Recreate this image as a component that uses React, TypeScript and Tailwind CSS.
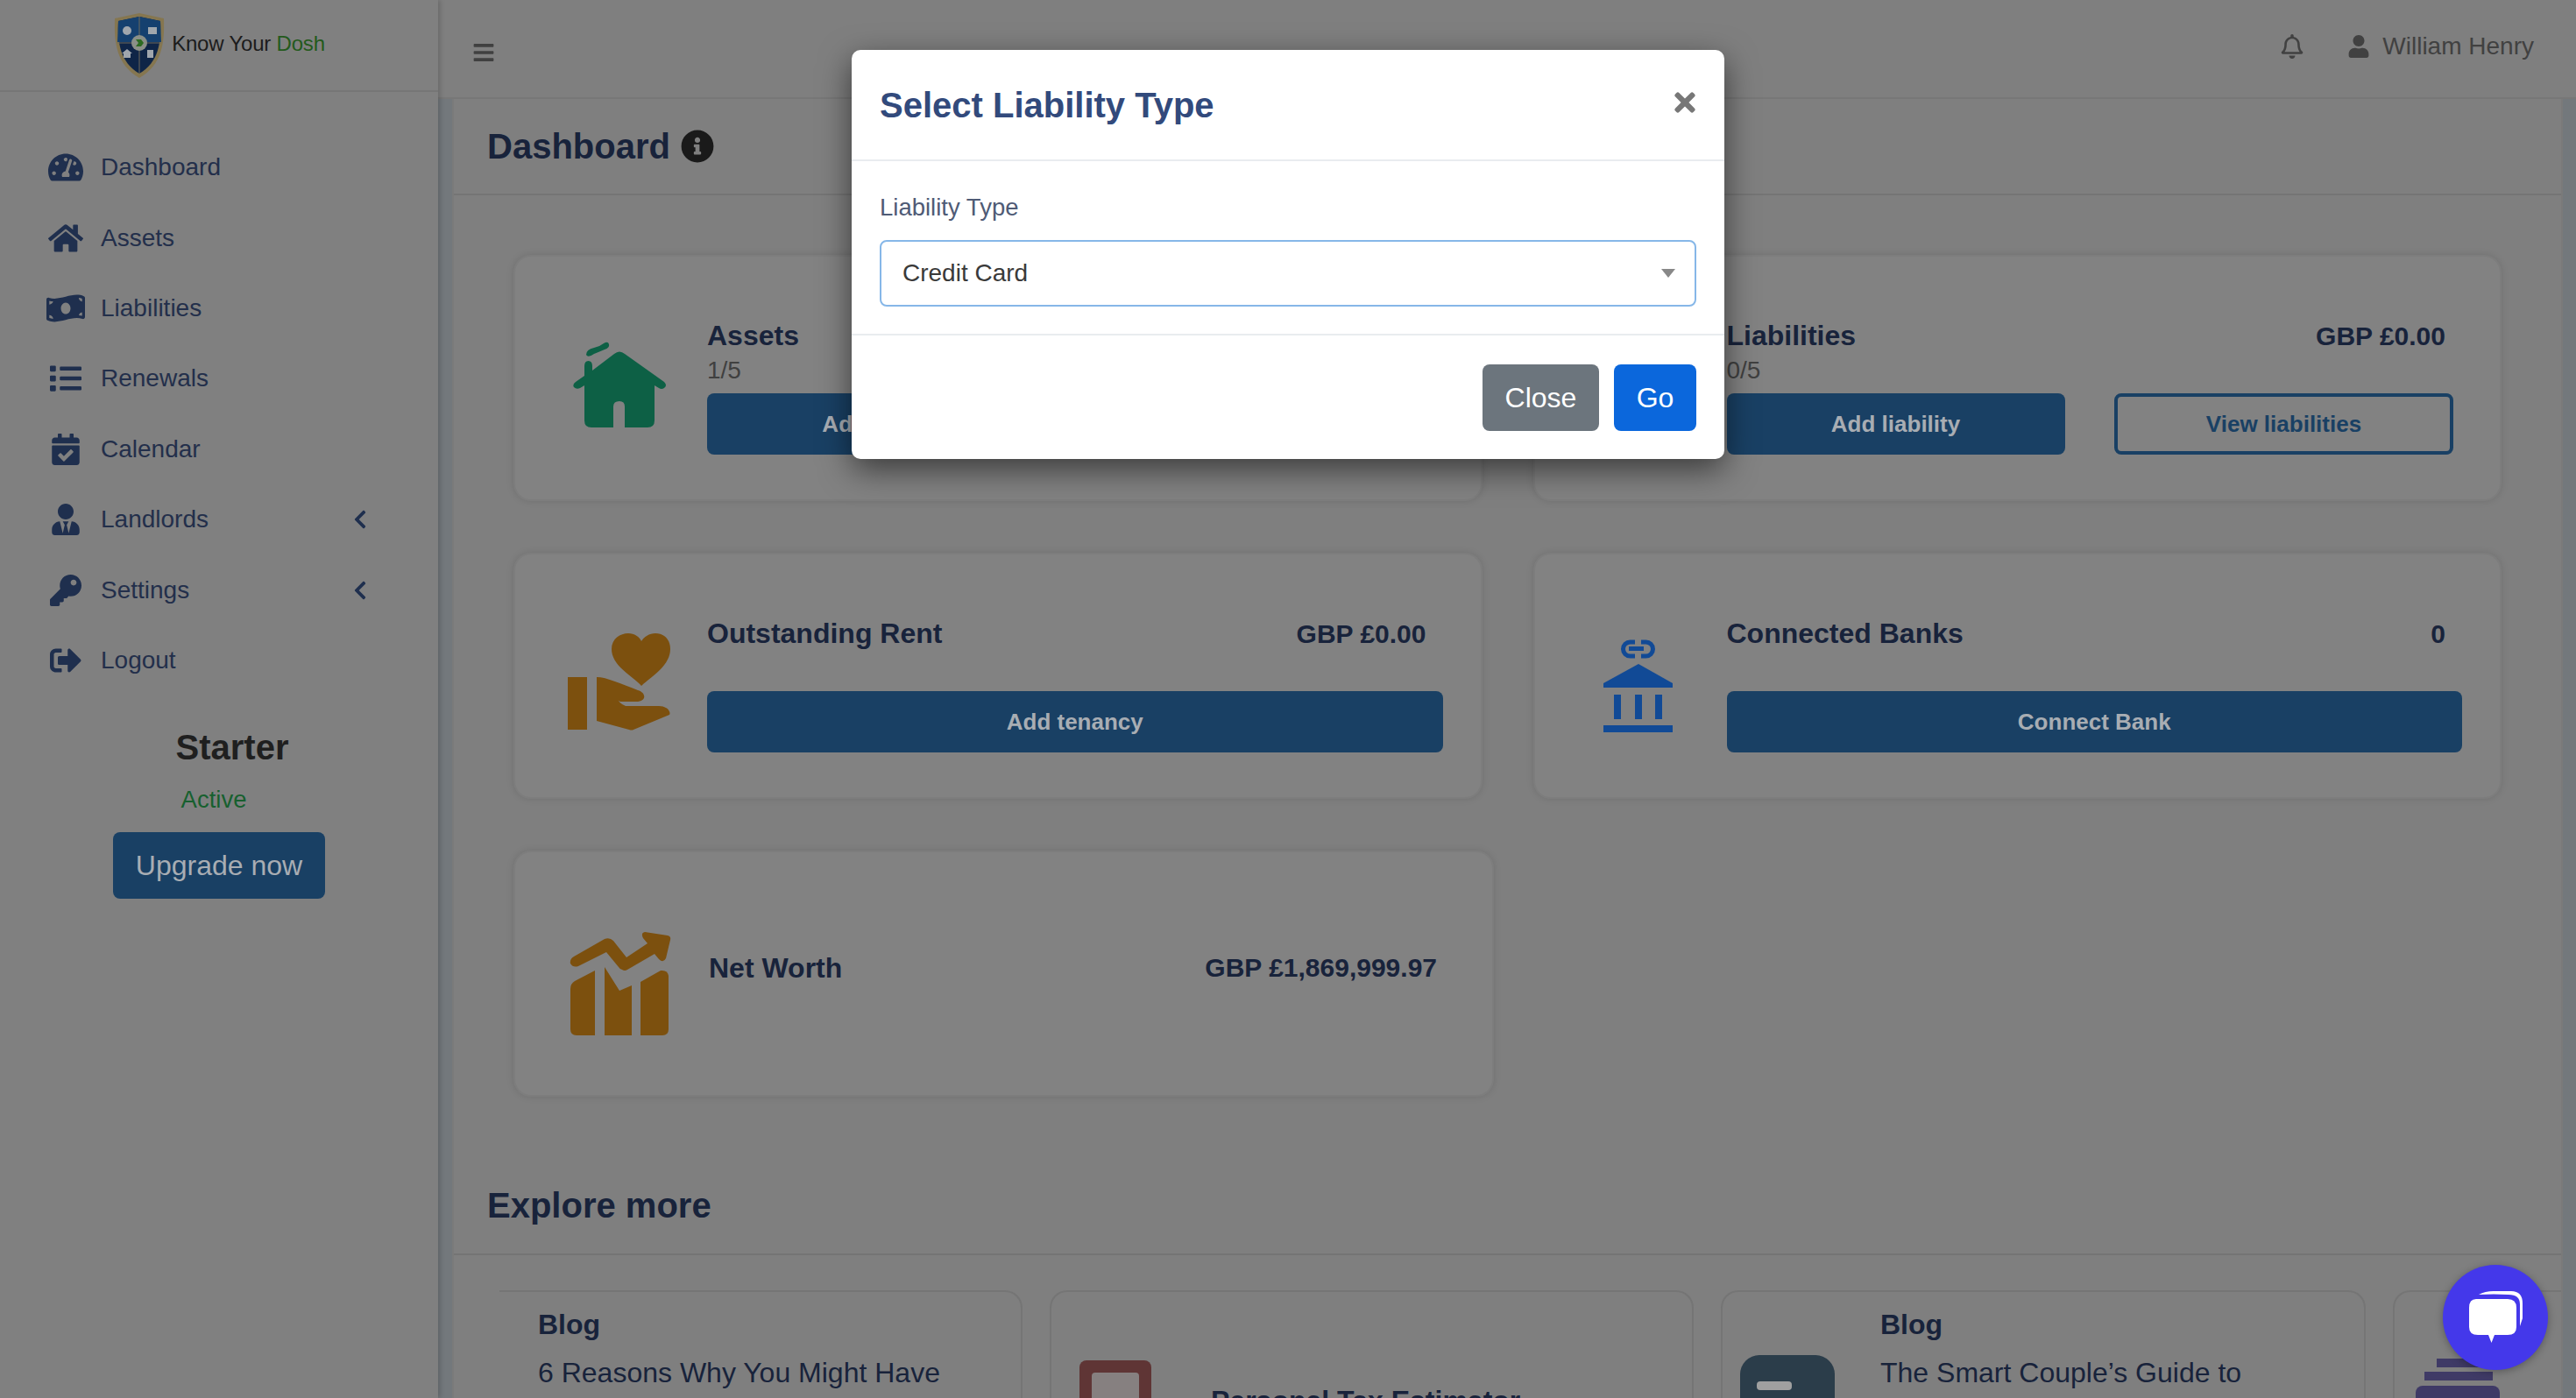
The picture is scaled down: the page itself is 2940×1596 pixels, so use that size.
import { FaTachometerAlt, FaHome, FaMoneyBillWave, FaList, FaCalendarCheck, FaUserTie, FaKey, FaSignOutAlt, FaChevronLeft, FaInfoCircle, FaBars, FaRegBell, FaUser, FaTimes } from "react-icons/fa";

const sans = "font-['Liberation_Sans',Arial,sans-serif]";

const navItems = [
  { label: "Dashboard", icon: FaTachometerAlt, size: 40 },
  { label: "Assets", icon: FaHome, size: 40 },
  { label: "Liabilities", icon: FaMoneyBillWave, size: 44 },
  { label: "Renewals", icon: FaList, size: 36 },
  { label: "Calendar", icon: FaCalendarCheck, size: 36 },
  { label: "Landlords", icon: FaUserTie, size: 36, arrow: true },
  { label: "Settings", icon: FaKey, size: 36, arrow: true },
  { label: "Logout", icon: FaSignOutAlt, size: 36 },
];

const Logo = () => (
  <svg width="60" height="76" viewBox="0 0 60 76" className="shrink-0">
    <path d="M30 1 L58 7 C59 35 56 60 30 75 C4 60 1 35 2 7 Z" fill="#857650" />
    <path d="M30 5 L54 10 C55 35 52 57 30 70 C8 57 5 35 6 10 Z" fill="#0f2547" />
    <path d="M30 5 L54 10 L55 34 L5 34 L6 10 Z" fill="#15406f" />
    <path d="M30 5 V70 M5 35 H55" stroke="#6e6a5c" strokeWidth="1" />
    <circle cx="30" cy="35" r="9" fill="#8b9088" />
    <path d="M26 31 h6 l3 4 -3 4 h-6 l3 -4z" fill="#2d6b22" />
    <circle cx="16" cy="21" r="5" fill="#a0a6ad" />
    <rect x="40" y="17" width="10" height="8" fill="#a0a6ad" />
    <path d="M10 47 l6 -5 6 5 h-2 v5 h-8 v-5z" fill="#a0a6ad" />
    <rect x="39" y="43" width="7" height="9" fill="#a0a6ad" />
  </svg>
);

const HouseIcon = () => (
  <svg width="106" height="100" viewBox="0 0 106 100" className="mt-[12px]">
    <path d="M47 16 Q53 11 59 16 L104 48 Q108 52 104 55 Q101 57 98 55 L93 52 V92 Q93 100 85 100 H59 V76 Q59 70 53 70 Q46 70 46 76 V100 H21 Q13 100 13 92 V52 L8 55 Q4 57 1 54 Q-1 51 3 48 L13 41 V30 Q13 24 17.500 24 Q22 24 22 30 V35 Z" fill="#0d6045" />
    <path d="M15 17 Q15 11 24 9 Q30 8 35 4 Q40 1 41 5 Q42 9 36 11 Q29 14 24 16 Q17 21 15 17Z" fill="#0d6045" />
  </svg>
);

const HandIcon = () => (
  <svg width="118" height="112" viewBox="0 0 118 112" className="mt-[14px]">
    <path d="M84 60 C76 50 50 38 50 18 C50 6 60 0 69 0 C76 0 82 4 84 9 C87 4 93 0 100 0 C110 0 117 7 117 18 C117 38 94 50 84 60Z" fill="#7c500e" />
    <rect x="0" y="50" width="22" height="60" fill="#7c500e" />
    <path d="M33 50 C44 50 62 58 80 65 C90 68 90 78 78 78 H60 Q56 76 56 73 Q58 80 66 83 H104 C114 83 118 90 116 93 L75 110 Q73 111 70 110 L33 100Z" fill="#7c500e" />
  </svg>
);

const BankIcon = () => (
  <svg width="80" height="106" viewBox="0 0 80 106" className="mt-[22px]">
    <path d="M36 3 H30.500 A8 8 0 0 0 30.500 19 H36 M43 3 H48.500 A8 8 0 0 1 48.500 19 H43" fill="none" stroke="#114a96" strokeWidth="5" />
    <rect x="29" y="8" width="17" height="5" fill="#114a96" />
    <path d="M40 28 L79 50 V55 H0 V50Z" fill="#114a96" />
    <rect x="12" y="63" width="8" height="28" fill="#114a96" />
    <rect x="36" y="63" width="8" height="28" fill="#114a96" />
    <rect x="59" y="63" width="8" height="28" fill="#114a96" />
    <rect x="0" y="98" width="79" height="8" fill="#114a96" />
  </svg>
);

const ChartIcon = () => (
  <svg width="116" height="120" viewBox="0 0 116 120" className="mt-[22px]">
    <path d="M86 1 L112 5 Q116 6 115 10 L110 31 Q107 37 102 32 L97 26 L66 44 Q63 46 60 44 Q58 44 56 41 L42 24 L10 40 Q4 42 1 37 Q0 32 5 29 L40 9 Q46 7 50 11 L65 30 L89 14 L84 8 Q81 2 86 1Z" fill="#7c500e" />
    <path d="M29 45 V119 H8 Q1 119 1 112 V66 Q1 60 6 57Z" fill="#7c500e" />
    <path d="M40 41 L57 68 L71 62 V119 H40Z" fill="#7c500e" />
    <path d="M81 58 L104 45 Q112 44 113 51 V112 Q113 119 106 119 H81Z" fill="#7c500e" />
  </svg>
);

const SolidButton = ({ label, className }: { label: string; className: string }) => (
  <button className={`flex h-[70px] items-center justify-center rounded-lg bg-[#194064] text-[26px] font-bold text-[#a8adb3] ${className}`}>
    {label}
  </button>
);

const OutlineButton = ({ label }: { label: string }) => (
  <button className="flex h-[70px] w-[387px] items-center justify-center rounded-lg border-[4px] border-[#194064] text-[26px] font-bold text-[#194064]">
    {label}
  </button>
);

const StatCard = ({
  icon,
  title,
  sub,
  value,
  children,
}: {
  icon: React.ReactNode;
  title: string;
  sub?: string;
  value: string;
  children: React.ReactNode;
}) => (
  <div className="flex h-[281px] rounded-[20px] border-2 border-[#7d7d7d] bg-[#828282] shadow-[0_0_8px_rgba(0,0,0,0.12)]">
    <div className="flex w-[219px] shrink-0 items-center justify-center pl-[18px]">{icon}</div>
    <div className="min-w-0 flex-1 pr-[43px] pt-[71px]">
      <div className="flex h-[38px] items-center justify-between pr-[19px] text-[#18233b]">
        <span className="text-[32px] font-bold">{title}</span>
        <span className="text-[30px] font-bold">{value}</span>
      </div>
      <div className="flex h-[38px] items-center pt-[3px] text-[28px] text-[#404040]">{sub}</div>
      <div className="mt-[9px] flex justify-between">{children}</div>
    </div>
  </div>
);

const ExploreCard = ({ className, children }: { className: string; children: React.ReactNode }) => (
  <div className={`h-[200px] shrink-0 rounded-t-[20px] border-2 border-b-0 border-[#757575] ${className}`}>{children}</div>
);

export default function App() {
  return (
    <div className={`relative flex h-[1596px] w-[2940px] overflow-hidden bg-[#7f7f7f] ${sans}`}>
      <aside className="z-10 h-full w-[500px] shrink-0 bg-[#808080] shadow-[2px_0_6px_rgba(0,0,0,0.2)]">
        <div className="flex h-[105px] items-center justify-center border-b-2 border-[#767676]">
          <Logo />
          <span className="mb-[4px] ml-[7px] text-[24px] tracking-[-0.2px] text-[#1c1c1c]">
            Know Your <span className="text-[#235a1c]">Dosh</span>
          </span>
        </div>
        <nav className="mt-[46px]">
          {navItems.map((item) => {
            const Icon = item.icon;
            return (
              <div key={item.label} className="flex h-[80.4px] items-center text-[#1f2f4e]">
                <div className="flex w-[115px] justify-center pl-[35px]">
                  <Icon size={item.size} />
                </div>
                <span className="w-[284px] text-[28px] text-[#232f4b]">{item.label}</span>
                {item.arrow && <FaChevronLeft size={24} />}
              </div>
            );
          })}
        </nav>
        <div className="mt-[34px] flex flex-col items-center">
          <div className="pl-[30px] text-[40px] leading-[50px] font-bold text-[#1f1f1f]">Starter</div>
          <div className="mt-[17px] pr-[12px] text-[27.5px] leading-[36px] text-[#17602f]">Active</div>
          <button className="mt-[19px] flex h-[76px] w-[242px] items-center justify-center rounded-lg bg-[#194064] text-[32px] text-[#a8adb3]">
            Upgrade now
          </button>
        </div>
      </aside>

      <main className="flex min-w-0 flex-1 flex-col bg-[#73787c]">
        <header className="flex h-[113px] shrink-0 items-center justify-between border-b-2 border-[#777777] bg-[#7f7f7f] pr-[48px] pl-[39px] pb-[6px]">
          <FaBars size={26} className="mt-[14px] text-[#404040]" />
          <div className="flex items-center text-[#414141]">
            <FaRegBell size={28} />
            <FaUser size={26} className="ml-[49px]" />
            <span className="ml-[14px] text-[28px]">William Henry</span>
          </div>
        </header>

        <section className="mr-[15px] ml-[16px] flex min-h-0 flex-1 flex-col overflow-hidden border-x-2 border-[#7a7a7a] bg-[#7f7f7f]">
          <div className="flex h-[110px] shrink-0 items-center gap-[12px] border-b-2 border-[#747474] pl-[38px] text-[#18233b]">
            <h1 className="text-[40px] font-bold">Dashboard</h1>
            <FaInfoCircle size={38} className="text-[#1a1a1a]" />
          </div>

          <div className="shrink-0 px-[68px] pt-[68px]">
            <div className="grid grid-cols-2 gap-x-[58px] gap-y-[59px]">
              <StatCard icon={<HouseIcon />} title="Assets" sub="1/5" value="GBP £0.00">
                <SolidButton label="Add asset" className="w-[387px]" />
                <OutlineButton label="View assets" />
              </StatCard>
              <StatCard icon={<HouseIcon />} title="Liabilities" sub="0/5" value="GBP £0.00">
                <SolidButton label="Add liability" className="w-[386px]" />
                <div className="mr-[10px]">
                  <OutlineButton label="View liabilities" />
                </div>
              </StatCard>
              <StatCard icon={<HandIcon />} title="Outstanding Rent" value="GBP £0.00">
                <SolidButton label="Add tenancy" className="w-full" />
              </StatCard>
              <StatCard icon={<BankIcon />} title="Connected Banks" value="0">
                <SolidButton label="Connect Bank" className="w-full" />
              </StatCard>
            </div>

            <div className="mt-[59px] flex h-[281px] w-[1119px] items-center rounded-[20px] border-2 border-[#7d7d7d] bg-[#828282] shadow-[0_0_8px_rgba(0,0,0,0.12)]">
              <div className="flex w-[221px] shrink-0 justify-center pl-[18px]">
                <ChartIcon />
              </div>
              <div className="mb-[14px] flex flex-1 items-center justify-between pr-[63px] text-[#18233b]">
                <span className="text-[32px] font-bold">Net Worth</span>
                <span className="text-[30px] font-bold">GBP £1,869,999.97</span>
              </div>
            </div>
          </div>

          <div className="mt-[85px] flex h-[96px] shrink-0 items-start border-b-2 border-[#747474] pt-[9px] pl-[38px] text-[40px] font-bold text-[#18233b]">
            Explore more
          </div>

          <div className="flex gap-[31px] pt-[40px] pl-[52px]">
            <ExploreCard className="w-[597px] rounded-tl-none border-l-0 pl-[44px] pt-[18px] text-[#18233b]">
              <div className="text-[32px] leading-[38px] font-bold">Blog</div>
              <div className="mt-[16px] text-[32px] leading-[40px]">6 Reasons Why You Might Have</div>
            </ExploreCard>
            <ExploreCard className="flex w-[735px] pl-[32px] pt-[78px] text-[#18233b]">
              <div className="h-[120px] w-[82px] rounded-t-lg bg-[#5f3535] pt-[14px] pl-[14px]">
                <div className="h-[40px] w-[54px] rounded-sm bg-[#868080]" />
              </div>
              <div className="ml-[68px] pt-[22px] text-[32px] font-bold">Personal Tax Estimator</div>
            </ExploreCard>
            <ExploreCard className="flex w-[736px] pl-[20px] pt-[72px] text-[#18233b]">
              <div className="h-[120px] w-[108px] rounded-t-[22px] bg-[#2b3d4a] pt-[30px] pl-[19px]">
                <div className="h-[10px] w-[40px] rounded-[4px] bg-[#a0a0a0]" />
              </div>
              <div className="ml-[52px] -mt-[54px]">
                <div className="text-[32px] leading-[38px] font-bold">Blog</div>
                <div className="mt-[16px] text-[32px] leading-[40px]">The Smart Couple’s Guide to</div>
              </div>
            </ExploreCard>
            <ExploreCard className="w-[300px] pl-[24px] pt-[76px]">
              <div className="ml-[24px] h-[10px] w-[60px] bg-[#3f3a66]" />
              <div className="mt-[5px] ml-[10px] h-[10px] w-[78px] bg-[#3f3a66]" />
              <div className="mt-[6px] h-[60px] w-[96px] rounded-t-lg bg-[#3f3a66]" />
            </ExploreCard>
          </div>
        </section>
      </main>

      {/* modal sits over the dimmed page */}
      <div className="absolute top-[57px] left-[972px] z-20 w-[996px] rounded-[10px] bg-white shadow-[0_12px_36px_rgba(0,0,0,0.55)]">
        <div className="flex h-[127px] items-center justify-between border-b-2 border-[#e9ecef] px-[32px]">
          <h2 className="text-[40px] font-bold text-[#324a7c]">Select Liability Type</h2>
          <FaTimes size={34} className="mb-[6px] -mr-[4px] text-[#777777]" />
        </div>
        <div className="h-[199px] border-b-2 border-[#e9ecef] px-[32px] pt-[35px]">
          <label className="block text-[27.5px] leading-[36px] text-[#4f5b76]">Liability Type</label>
          <div className="mt-[19px] flex h-[76px] items-center justify-between rounded-lg border-2 border-[#86b7e8] pr-[22px] pl-[24px]">
            <span className="text-[28px] text-[#3a3a3a]">Credit Card</span>
            <span className="h-0 w-0 border-x-[8px] border-t-[10px] border-x-transparent border-t-[#888888]" />
          </div>
        </div>
        <div className="flex h-[141px] items-center justify-end gap-[17px] px-[32px]">
          <button className="h-[76px] w-[133px] rounded-lg bg-[#6c757d] text-[32px] text-white">Close</button>
          <button className="h-[76px] w-[94px] rounded-lg bg-[#0b67dc] text-[32px] text-white">Go</button>
        </div>
      </div>

      {/* chat launcher */}
      <div className="absolute right-[32px] bottom-[32px] z-30 flex h-[120px] w-[120px] items-center justify-center rounded-full bg-[#4438ea] shadow-[0_2px_10px_rgba(0,0,0,0.3)]">
        <svg width="64" height="64" viewBox="0 0 64 64">
          <path d="M13 6 Q20 2 30 2 H50 Q63 2 63 16 V33 L60 42 V17 Q60 6 47 6 Q30 5 13 6Z" fill="white" />
          <path d="M10 11 H46 Q56 11 56 21 V43 Q56 52 46 52 H31 L27.500 61 L24 52 H12 Q2 52 2 43 V21 Q2 11 10 11Z" fill="white" />
        </svg>
      </div>
    </div>
  );
}
